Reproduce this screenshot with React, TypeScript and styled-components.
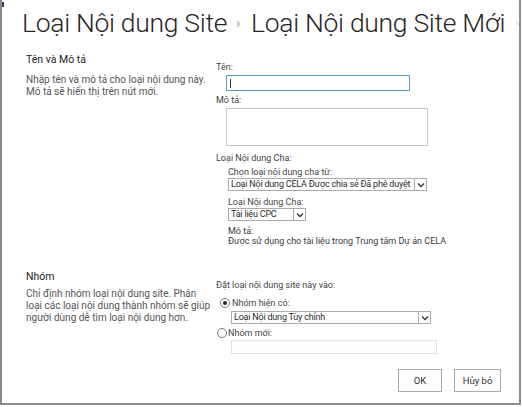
import React from "react"
import styled, { createGlobalStyle } from "styled-components"

const GlobalStyle = createGlobalStyle`
  html, body { margin: 0; padding: 0; background: #ffffff; }
  body { font-family: Roboto, "Noto Sans", sans-serif; color: #444444; }
`

const Frame = styled.div`
  width: 517px;
  height: 403px;
  border-left: 2px solid #8a8a8a;
  border-right: 2px solid #8a8a8a;
  border-bottom: 2px solid #8a8a8a;
  position: relative;
  overflow: hidden;
`
const Corner = styled.div`
  position: absolute;
  left: 0;
  top: 2px;
  width: 2px;
  height: 5px;
  background: #333a55;
`
const TitleRow = styled.div`
  display: flex;
  align-items: center;
  padding: 1px 0 0 20px;
  height: 42px;
`
const Title = styled.h1`
  margin: 0;
  font-family: Roboto, sans-serif;
  font-weight: 300;
  font-size: 26.5px;
  letter-spacing: -0.3px;
  color: #262626;
  white-space: nowrap;
`
const Crumb = styled.span`
  display: inline-block;
  width: 0;
  height: 0;
  border-top: 4px solid transparent;
  border-bottom: 4px solid transparent;
  border-left: 4px solid #c8c8c8;
  margin: 3px 10px 0 10px;
`
const Info = styled.svg`
  margin-left: 11px;
  margin-top: 3px;
`
const Section = styled.div`
  display: grid;
  grid-template-columns: 190px 1fr;
  padding-left: 24px;
`
const Left = styled.div<{ $top: number }>`
  padding-top: ${p => p.$top}px;
`
const Heading = styled.div<{ $gap: number }>`
  font-size: 10.5px;
  line-height: 12px;
  color: #222222;
  margin-bottom: ${p => p.$gap}px;
`
const Desc = styled.div`
  font-size: 10px;
  line-height: 12px;
  color: #555555;
  white-space: nowrap;
`
const Right = styled.div<{ $top: number }>`
  padding-top: ${p => p.$top}px;
  display: flex;
  flex-direction: column;
`
type Offs = { $indent?: number; $mt?: number }
const Label = styled.div<Offs>`
  font-size: 9px;
  line-height: 12px;
  color: #444444;
  margin-left: ${p => p.$indent || 0}px;
  margin-top: ${p => p.$mt || 0}px;
  white-space: nowrap;
`
const Note = styled(Label)`
  line-height: 10px;
  color: #3a3a3a;
`
const TextInput = styled.div<Offs & { $w: number; $h: number; $focus?: boolean; $dim?: boolean }>`
  width: ${p => p.$w}px;
  height: ${p => p.$h}px;
  box-sizing: border-box;
  border: 1px solid ${p => (p.$focus ? "#5b9bd5" : p.$dim ? "#e1e1e1" : "#c6c6c6")};
  background: ${p => (p.$dim ? "#fdfdfd" : "#ffffff")};
  margin-left: ${p => p.$indent || 0}px;
  margin-top: ${p => p.$mt || 0}px;
  position: relative;
`
const Caret = styled.div`
  position: absolute;
  left: 3px;
  top: 3px;
  width: 1px;
  height: 9px;
  background: #333;
`
const Select = styled.div<Offs & { $w: number }>`
  width: ${p => p.$w}px;
  height: 13px;
  box-sizing: border-box;
  border: 1px solid #ababab;
  display: flex;
  align-items: center;
  margin-left: ${p => p.$indent || 0}px;
  margin-top: ${p => p.$mt || 0}px;
  font-size: 9px;
  color: #2a2a2a;
`
const SelectText = styled.span`
  flex: 1;
  padding-left: 2px;
  white-space: nowrap;
  overflow: hidden;
  line-height: 11px;
  letter-spacing: -0.2px;
`
const ArrowBox = styled.span`
  width: 12px;
  height: 11px;
  box-sizing: border-box;
  border-left: 1px solid #ababab;
  display: flex;
  align-items: center;
  justify-content: center;
`
const RadioRow = styled.div<Offs>`
  display: flex;
  align-items: center;
  margin-left: ${p => p.$indent || 0}px;
  margin-top: ${p => p.$mt || 0}px;
  font-size: 9px;
  color: #444444;
  line-height: 12px;
`
const Radio = styled.span<{ $on?: boolean; $gap: number }>`
  width: 10px;
  height: 10px;
  box-sizing: border-box;
  border: 1px solid #777;
  border-radius: 50%;
  margin-right: ${p => p.$gap}px;
  display: flex;
  align-items: center;
  justify-content: center;
  &::after {
    content: "";
    width: 4px;
    height: 4px;
    border-radius: 50%;
    background: ${p => (p.$on ? "#222" : "transparent")};
  }
`
const Buttons = styled.div`
  display: flex;
  justify-content: flex-end;
  gap: 12px;
  padding: 15px 18px 0 0;
`
const Button = styled.button<{ $w: number }>`
  width: ${p => p.$w}px;
  height: 23px;
  border: 1px solid #ababab;
  background: #fdfdfd;
  font-family: Roboto, sans-serif;
  font-size: 9.5px;
  color: #333333;
  padding: 0;
`

const Arrow = () => (
  <ArrowBox>
    <svg width="8" height="6" viewBox="0 0 8 6">
      <path d="M1 1.5 L4 4.5 L7 1.5" fill="none" stroke="#333" strokeWidth="1.3" />
    </svg>
  </ArrowBox>
)

const App = () => {
  return (
    <>
      <GlobalStyle />
      <Frame>
        <Corner />
        <TitleRow>
          <Title>Loại Nội dung Site</Title>
          <Crumb />
          <Title>Loại Nội dung Site Mới</Title>
          <Info width="11" height="11" viewBox="0 0 11 11">
            <circle cx="5.5" cy="5.5" r="4.6" fill="none" stroke="#9a9a9a" strokeWidth="1" />
            <rect x="5" y="4.5" width="1" height="3.5" fill="#9a9a9a" />
            <rect x="5" y="2.8" width="1" height="1" fill="#9a9a9a" />
          </Info>
        </TitleRow>

        <Section>
          <Left $top={11}>
            <Heading $gap={8}>Tên và Mô tả</Heading>
            <Desc>
              Nhập tên và mô tả cho loại nội dung này.
              <br />
              Mô tả sẽ hiển thị trên nút mới.
            </Desc>
          </Left>
          <Right $top={18}>
            <Label>Tên:</Label>
            <TextInput $w={184} $h={16} $indent={10} $mt={2} $focus>
              <Caret />
            </TextInput>
            <Label $mt={3}>Mô tả:</Label>
            <TextInput $w={202} $h={38} $indent={10} $mt={2} />
            <Label $mt={6}>Loại Nội dung Cha:</Label>
            <Label $indent={12} $mt={2}>Chọn loại nội dung cha từ:</Label>
            <Select $w={199} $indent={12}>
              <SelectText>Loại Nội dung CELA Được chia sẻ Đã phê duyệt</SelectText>
              <Arrow />
            </Select>
            <Label $indent={12} $mt={5}>Loại Nội dung Cha:</Label>
            <Select $w={78} $indent={12}>
              <SelectText>Tài liệu CPC</SelectText>
              <Arrow />
            </Select>
            <Note $indent={12} $mt={5}>
              Mô tả:
              <br />
              Được sử dụng cho tài liệu trong Trung tâm Dự án CELA
            </Note>
          </Right>
        </Section>

        <Section>
          <Left $top={25}>
            <Heading $gap={5}>Nhóm</Heading>
            <Desc>
              Chỉ định nhóm loại nội dung site. Phân
              <br />
              loại các loại nội dung thành nhóm sẽ giúp
              <br />
              người dùng dễ tìm loại nội dung hơn.
            </Desc>
          </Left>
          <Right $top={33}>
            <Label>Đặt loại nội dung site này vào:</Label>
            <RadioRow $indent={4} $mt={6}>
              <Radio $on $gap={2} />
              Nhóm hiện có:
            </RadioRow>
            <Select $w={200} $indent={15} $mt={2}>
              <SelectText>Loại Nội dung Tùy chỉnh</SelectText>
              <Arrow />
            </Select>
            <RadioRow $indent={1} $mt={3}>
              <Radio $gap={1} />
              Nhóm mới:
            </RadioRow>
            <TextInput $w={206} $h={14} $indent={15} $mt={1} $dim />
          </Right>
        </Section>

        <Buttons>
          <Button $w={44}>OK</Button>
          <Button $w={47}>Hủy bỏ</Button>
        </Buttons>
      </Frame>
    </>
  )
}

export default App
